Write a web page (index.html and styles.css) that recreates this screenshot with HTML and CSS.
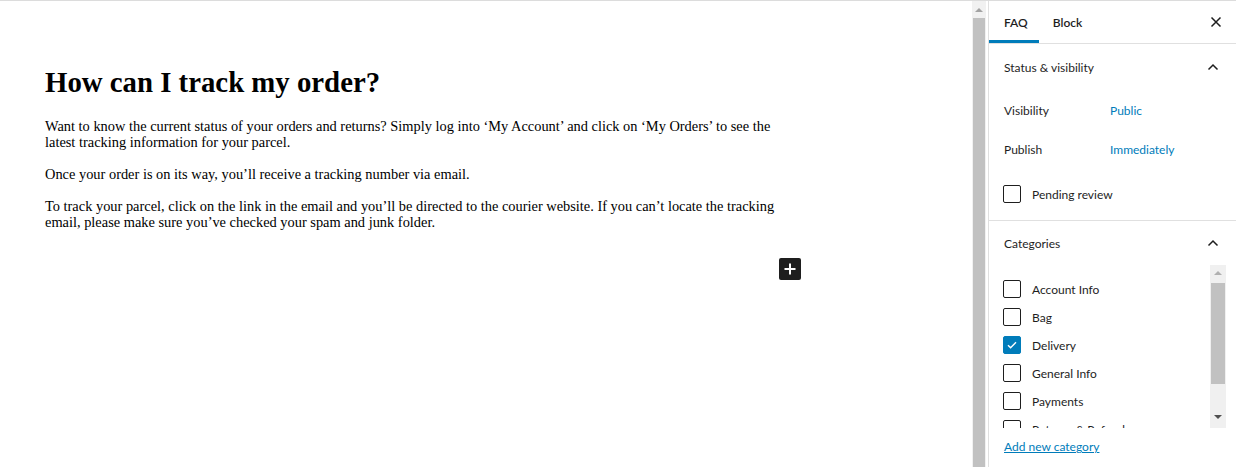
FILE: index.html
```html
<!DOCTYPE html>
<html lang="en">
<head>
<meta charset="utf-8">
<title>FAQ editor</title>
<link rel="stylesheet" href="styles.css">
</head>
<body>
<div class="editor">
  <div class="content">
    <h1 class="title">How can I track my order?</h1>
    <p class="para">Want to know the current status of your orders and returns? Simply log into ‘My Account’ and click on ‘My Orders’ to see the latest tracking information for your parcel.</p>
    <p class="para">Once your order is on its way, you’ll receive a tracking number via email.</p>
    <p class="para last">To track your parcel, click on the link in the email and you’ll be directed to the courier website. If you can’t locate the tracking email, please make sure you’ve checked your spam and junk folder.</p>
    <div class="inserter-row">
      <button class="inserter" aria-label="Add block">
        <svg width="14" height="14" viewBox="0 0 14 14"><path d="M7 1.5v11M1.5 7h11" stroke="#fff" stroke-width="2"/></svg>
      </button>
    </div>
  </div>
</div>
<div class="vscroll">
  <div class="arrow-up"></div>
  <div class="vthumb"></div>
</div>
<aside class="sidebar">
  <div class="tabs">
    <div class="tab active">FAQ</div>
    <div class="tab">Block</div>
    <div class="close">
      <svg width="12" height="12" viewBox="0 0 12 12"><path d="M1.5 1.5l9 9M10.5 1.5l-9 9" stroke="#1e1e1e" stroke-width="1.5"/></svg>
    </div>
  </div>
  <section class="panel">
    <div class="panel-head">
      <span>Status &amp; visibility</span>
      <svg class="chev" width="12" height="8" viewBox="0 0 12 8"><path d="M1.5 6.5L6 2l4.5 4.5" fill="none" stroke="#1e1e1e" stroke-width="1.5"/></svg>
    </div>
    <div class="panel-body">
      <div class="row"><span class="label">Visibility</span><span class="value">Public</span></div>
      <div class="row"><span class="label">Publish</span><span class="value">Immediately</span></div>
      <div class="check-row"><span class="box"></span><span class="check-label">Pending review</span></div>
    </div>
  </section>
  <section class="panel cats">
    <div class="panel-head head2">
      <span>Categories</span>
      <svg class="chev" width="12" height="8" viewBox="0 0 12 8"><path d="M1.5 6.5L6 2l4.5 4.5" fill="none" stroke="#1e1e1e" stroke-width="1.5"/></svg>
    </div>
    <div class="cat-wrap">
      <div class="cat-list">
        <div class="cat"><span class="box"></span><span class="check-label">Account Info</span></div>
        <div class="cat"><span class="box"></span><span class="check-label">Bag</span></div>
        <div class="cat"><span class="box checked"><svg width="14" height="14" viewBox="0 0 14 14"><path d="M3 7.2l2.6 2.6L11 4.2" fill="none" stroke="#fff" stroke-width="1.4"/></svg></span><span class="check-label">Delivery</span></div>
        <div class="cat"><span class="box"></span><span class="check-label">General Info</span></div>
        <div class="cat"><span class="box"></span><span class="check-label">Payments</span></div>
        <div class="cat"><span class="box"></span><span class="check-label">Returns &amp; Refunds</span></div>
      </div>
      <div class="lscroll">
        <div class="arrow-up small"></div>
        <div class="lthumb"></div>
        <div class="lspacer"></div>
        <div class="arrow-down"></div>
      </div>
    </div>
    <a class="add-link" href="#">Add new category</a>
  </section>
</aside>
</body>
</html>
```
FILE: styles.css
```css
html, body {
  margin: 0;
  padding: 0;
}
body {
  display: flex;
  height: 466px;
  overflow: hidden;
  border-top: 1px solid #dcdcdc;
  background: #fff;
  color: #1e1e1e;
}
.editor {
  width: 972px;
  flex: none;
  padding: 65px 0 0 45px;
  box-sizing: border-box;
  font-family: "Liberation Serif", "Times New Roman", serif;
  color: #000;
}
.content {
  width: 756px;
}
.title {
  font-size: 28.8px;
  line-height: 33px;
  font-weight: bold;
  margin: 0 0 19px;
}
.para {
  font-size: 14.4px;
  line-height: 16px;
  margin: 0 0 16px;
}
.para.last {
  margin-bottom: 0;
}
.inserter-row {
  display: flex;
  justify-content: flex-end;
  margin-top: 28px;
}
.inserter {
  width: 22px;
  height: 22px;
  padding: 0;
  border: none;
  border-radius: 2px;
  background: #1e1e1e;
  display: flex;
  align-items: center;
  justify-content: center;
}
.vscroll {
  width: 14px;
  flex: none;
  background: #f1f1f1;
  margin-right: 2px;
  display: flex;
  flex-direction: column;
  align-items: center;
}
.arrow-up {
  width: 0;
  height: 0;
  border-left: 4px solid transparent;
  border-right: 4px solid transparent;
  border-bottom: 4px solid #a3a3a3;
  margin-top: 7px;
}
.vthumb {
  width: 12px;
  flex: 1;
  margin-top: 6px;
  background: #c1c1c1;
}
.sidebar {
  flex: 1;
  border-left: 1px solid #e0e0e0;
  font-family: Lato, "Noto Sans", sans-serif;
  font-size: 12px;
  color: #1e1e1e;
}
.tabs {
  display: flex;
  align-items: stretch;
  height: 42px;
  border-bottom: 1px solid #e0e0e0;
}
.tab {
  display: flex;
  align-items: center;
  padding: 0 14px;
  font-weight: 600;
}
.tab.active {
  padding: 0 11px 0 15px;
  box-shadow: inset 0 -3px 0 #007cba;
}
.close {
  margin-left: auto;
  width: 40px;
  display: flex;
  align-items: center;
  justify-content: center;
}
.panel {
  border-bottom: 1px solid #e0e0e0;
}
.panel-head {
  height: 46px;
  display: flex;
  align-items: center;
  justify-content: space-between;
  padding: 0 15px;
}
.head2 {
  height: 44px;
}
.chev {
  margin-right: 2px;
}
.panel-body {
  padding: 1px 15px 4px;
}
.row {
  height: 39px;
  display: flex;
  align-items: center;
}
.label {
  width: 106px;
}
.value {
  color: #007cba;
}
.check-row {
  margin-top: 3px;
  height: 44px;
  display: flex;
  align-items: center;
  margin-left: -1px;
}
.box {
  width: 18px;
  height: 18px;
  box-sizing: border-box;
  border: 1px solid #1e1e1e;
  border-radius: 2px;
  flex: none;
  display: flex;
  align-items: center;
  justify-content: center;
}
.box.checked {
  background: #007cba;
  border-color: #007cba;
}
.check-label {
  margin-left: 11px;
}
.cats {
  border-bottom: none;
}
.cat-wrap {
  display: flex;
  height: 163px;
  padding: 0 10px 0 14px;
}
.cat-list {
  flex: 1;
  overflow: hidden;
  padding-top: 10px;
}
.cat {
  height: 28px;
  display: flex;
  align-items: center;
}
.lscroll {
  width: 16px;
  background: #f0f0f0;
  display: flex;
  flex-direction: column;
  align-items: center;
}
.arrow-up.small {
  margin-top: 6px;
  border-bottom-color: #b0b0b0;
}
.lthumb {
  width: 14px;
  height: 101px;
  margin-top: 8px;
  background: #c1c1c1;
}
.lspacer {
  flex: 1;
}
.arrow-down {
  width: 0;
  height: 0;
  border-left: 4px solid transparent;
  border-right: 4px solid transparent;
  border-top: 4px solid #505050;
  margin-bottom: 9px;
}
.add-link {
  display: inline-block;
  margin: 10px 0 0 15px;
  color: #007cba;
  text-decoration: underline;
  line-height: 18px;
}
```
